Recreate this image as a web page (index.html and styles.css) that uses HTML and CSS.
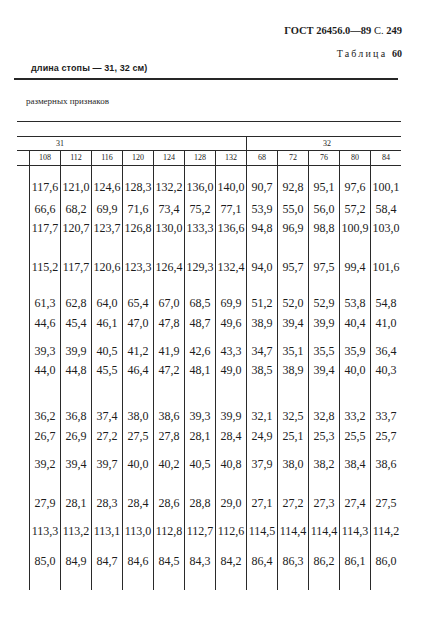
FILE: index.html
```html
<!DOCTYPE html>
<html lang="ru">
<head>
<meta charset="utf-8">
<title>ГОСТ 26456.0—89 С. 249</title>
<link rel="stylesheet" href="styles.css">
</head>
<body>
<div class="page">
  <div class="running-head">ГОСТ 26456.0—89 <span class="light">С.</span> 249</div>
  <div class="caption">Таблица <b>60</b></div>
  <div class="title">длина стопы — 31, 32 см)</div>
  <div class="rule"></div>
  <div class="subhead">размерных признаков</div>

  <div class="tbl">
    <div class="band"></div>
    <div class="groups">
      <div class="group group-31">31</div>
      <div class="group group-32">32</div>
    </div>
    <div class="heads">
      <span class="sliver"></span>
      <span>108</span><span>112</span><span>116</span><span>120</span><span>124</span><span>128</span><span>132</span>
      <span>68</span><span>72</span><span>76</span><span>80</span><span>84</span>
    </div>
    <div class="body">
      <span>117,6</span><span>121,0</span><span>124,6</span><span>128,3</span><span>132,2</span><span>136,0</span><span>140,0</span><span>90,7</span><span>92,8</span><span>95,1</span><span>97,6</span><span>100,1</span>
      <span>66,6</span><span>68,2</span><span>69,9</span><span>71,6</span><span>73,4</span><span>75,2</span><span>77,1</span><span>53,9</span><span>55,0</span><span>56,0</span><span>57,2</span><span>58,4</span>
      <span>117,7</span><span>120,7</span><span>123,7</span><span>126,8</span><span>130,0</span><span>133,3</span><span>136,6</span><span>94,8</span><span>96,9</span><span>98,8</span><span>100,9</span><span>103,0</span>
      <span>115,2</span><span>117,7</span><span>120,6</span><span>123,3</span><span>126,4</span><span>129,3</span><span>132,4</span><span>94,0</span><span>95,7</span><span>97,5</span><span>99,4</span><span>101,6</span>
      <span>61,3</span><span>62,8</span><span>64,0</span><span>65,4</span><span>67,0</span><span>68,5</span><span>69,9</span><span>51,2</span><span>52,0</span><span>52,9</span><span>53,8</span><span>54,8</span>
      <span>44,6</span><span>45,4</span><span>46,1</span><span>47,0</span><span>47,8</span><span>48,7</span><span>49,6</span><span>38,9</span><span>39,4</span><span>39,9</span><span>40,4</span><span>41,0</span>
      <span>39,3</span><span>39,9</span><span>40,5</span><span>41,2</span><span>41,9</span><span>42,6</span><span>43,3</span><span>34,7</span><span>35,1</span><span>35,5</span><span>35,9</span><span>36,4</span>
      <span>44,0</span><span>44,8</span><span>45,5</span><span>46,4</span><span>47,2</span><span>48,1</span><span>49,0</span><span>38,5</span><span>38,9</span><span>39,4</span><span>40,0</span><span>40,3</span>
      <span>36,2</span><span>36,8</span><span>37,4</span><span>38,0</span><span>38,6</span><span>39,3</span><span>39,9</span><span>32,1</span><span>32,5</span><span>32,8</span><span>33,2</span><span>33,7</span>
      <span>26,7</span><span>26,9</span><span>27,2</span><span>27,5</span><span>27,8</span><span>28,1</span><span>28,4</span><span>24,9</span><span>25,1</span><span>25,3</span><span>25,5</span><span>25,7</span>
      <span>39,2</span><span>39,4</span><span>39,7</span><span>40,0</span><span>40,2</span><span>40,5</span><span>40,8</span><span>37,9</span><span>38,0</span><span>38,2</span><span>38,4</span><span>38,6</span>
      <span>27,9</span><span>28,1</span><span>28,3</span><span>28,4</span><span>28,6</span><span>28,8</span><span>29,0</span><span>27,1</span><span>27,2</span><span>27,3</span><span>27,4</span><span>27,5</span>
      <span>113,3</span><span>113,2</span><span>113,1</span><span>113,0</span><span>112,8</span><span>112,7</span><span>112,6</span><span>114,5</span><span>114,4</span><span>114,4</span><span>114,3</span><span>114,2</span>
      <span>85,0</span><span>84,9</span><span>84,7</span><span>84,6</span><span>84,5</span><span>84,3</span><span>84,2</span><span>86,4</span><span>86,3</span><span>86,2</span><span>86,1</span><span>86,0</span>
    </div>
  </div>
</div>
</body>
</html>
```

FILE: styles.css
```css
html, body {
  margin: 0;
  padding: 0;
  background: #ffffff;
}

body {
  color: #1c1c1c;
  font-family: "Liberation Serif", "DejaVu Serif", serif;
}

.page {
  width: 424px;
  height: 632px;
  overflow: hidden;
}

.running-head {
  margin: 24px 22px 0 0;
  text-align: right;
  font-size: 10.5px;
  line-height: 14px;
  font-weight: bold;
}

.running-head .light {
  font-weight: normal;
}

.caption {
  margin: 9px 22px 0 0;
  text-align: right;
  font-size: 10px;
  line-height: 14px;
  letter-spacing: 2.2px;
}

.caption b {
  letter-spacing: 0;
}

.title {
  padding-left: 31px;
  font-family: "Liberation Sans", Arial, sans-serif;
  font-weight: bold;
  font-size: 9px;
  line-height: 14px;
  letter-spacing: 0.1px;
}

.rule {
  margin: 3px 26px 0 14px;
  border-top: 2px solid #262626;
}

.subhead {
  margin: 15px 0 0 26px;
  font-size: 9px;
  line-height: 12px;
  color: #2a2a2a;
}

.tbl {
  margin: 14px 0 0 17px;
  width: 384px;
}

.band {
  box-sizing: border-box;
  height: 16px;
  border-top: 1px solid #2a2a2a;
  border-bottom: 1px solid #2a2a2a;
}

.groups {
  box-sizing: border-box;
  display: grid;
  grid-template-columns: 229px 155px;
  height: 14px;
  border-bottom: 1px solid #2a2a2a;
}

.group {
  font-size: 8px;
  line-height: 13px;
}

.group-31 {
  padding-left: 39px;
}

.group-32 {
  border-left: 1px solid #2a2a2a;
  text-align: center;
  padding-left: 6px;
}

.heads {
  box-sizing: border-box;
  display: grid;
  grid-template-columns: 12px repeat(12, 31px);
  height: 15px;
  border-bottom: 1px solid #2a2a2a;
}

.heads span {
  border-left: 1px solid #2a2a2a;
  text-align: center;
  font-size: 8px;
  line-height: 14px;
}

.heads .sliver {
  border-left: 0;
}

.body {
  display: grid;
  margin-left: 12px;
  grid-template-columns: repeat(12, 31px);
  grid-template-rows: 35px 19px 39px 36px 20px 28px 19px 46px 20px 28px 39px 28px 30px 37px;
}

.body span {
  border-left: 1px solid #2a2a2a;
  text-align: center;
  font-size: 12px;
  line-height: 16px;
  white-space: nowrap;
}

.body span:nth-child(-n+12) {
  padding-top: 13px;
}
```
